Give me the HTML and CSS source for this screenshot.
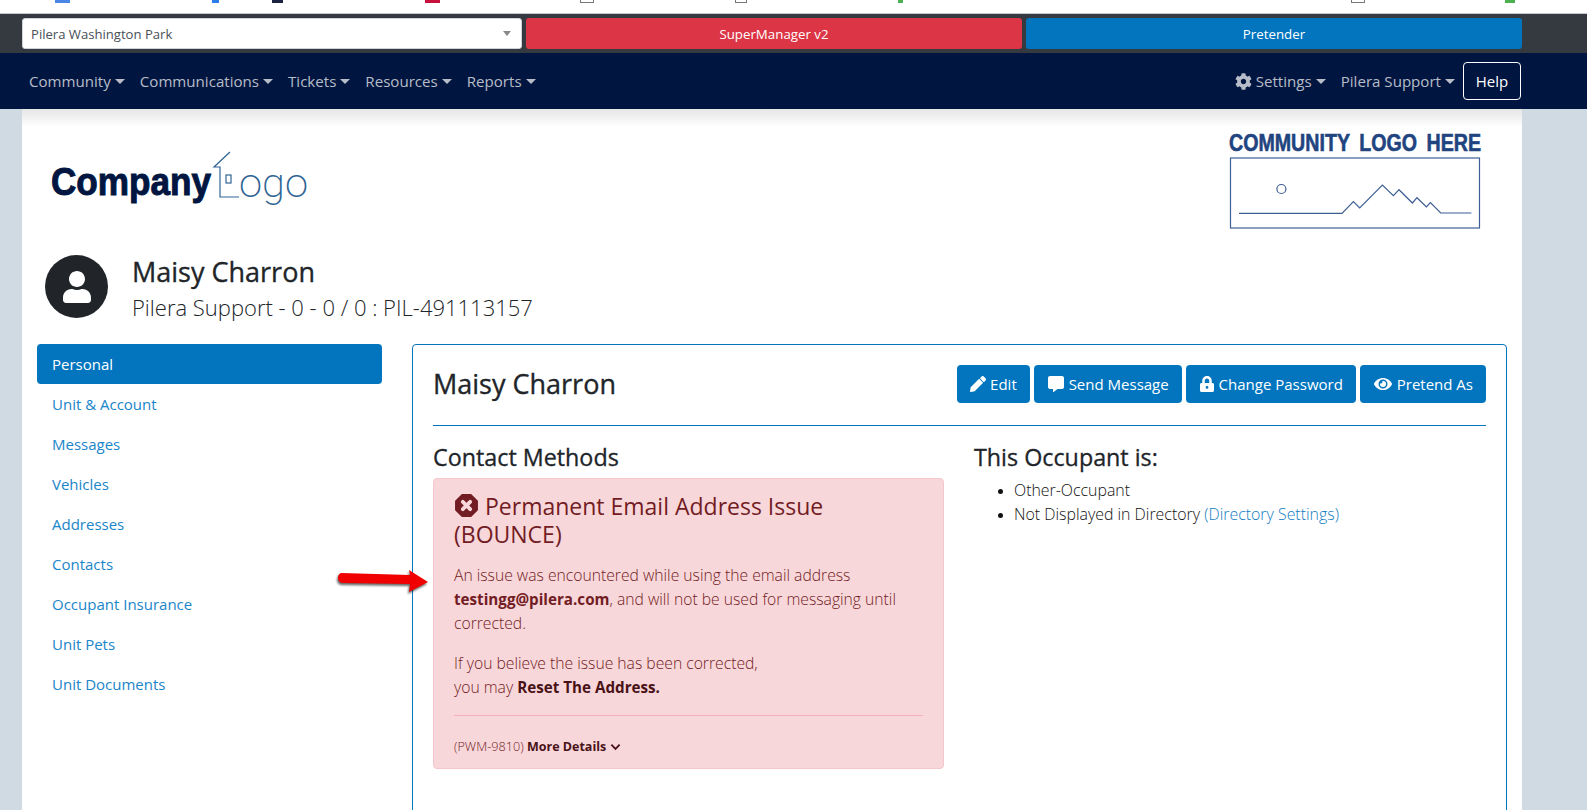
FILE: index.html
```html
<!DOCTYPE html>
<html lang="en">

<head>
    <meta charset="UTF-8">
    <meta name="viewport" content="width=device-width, initial-scale=1.0">
    <title>Maisy Charron</title>
    <link rel="stylesheet" href="styles.css">
</head>

<body>

    <!-- cut off browser bookmarks -->
    <div class="bookmarks">
        <span class="mark mark-blue"></span>
        <span class="mark mark-gem"></span>
        <span class="mark mark-dark"></span>
        <span class="mark mark-red"></span>
        <span class="mark mark-box"></span>
        <span class="mark mark-box2"></span>
        <span class="mark mark-green"></span>
        <span class="mark mark-box3"></span>
        <span class="mark mark-green2"></span>
    </div>

    <div class="switchbar">
        <div class="community-select">
            <span>Pilera Washington Park</span>
            <span class="select-arrow"></span>
        </div>
        <a class="bar-btn bar-red">SuperManager v2</a>
        <a class="bar-btn bar-blue">Pretender</a>
    </div>

    <nav class="navbar">
        <a class="nav-link caret">Community</a>
        <a class="nav-link caret">Communications</a>
        <a class="nav-link caret">Tickets</a>
        <a class="nav-link caret">Resources</a>
        <a class="nav-link caret">Reports</a>
        <span class="nav-space"></span>
        <a class="nav-link caret"><svg class="icon icon-gear" viewBox="0 0 512 512"><path d="M487.4 315.7l-42.6-24.6c4.3-23.2 4.3-47 0-70.2l42.6-24.6c4.9-2.8 7.1-8.6 5.5-14-11.1-35.6-30-67.8-54.7-94.6-3.8-4.1-10-5.1-14.8-2.3L380.8 110c-17.9-15.4-38.5-27.3-60.8-35.1V25.8c0-5.6-3.9-10.5-9.4-11.7-36.7-8.2-74.3-7.8-109.2 0-5.5 1.2-9.4 6.1-9.4 11.7V75c-22.2 7.9-42.8 19.8-60.8 35.1L88.7 85.5c-4.9-2.8-11-1.9-14.8 2.3-24.7 26.7-43.6 58.9-54.7 94.6-1.7 5.4.6 11.2 5.5 14L67.3 221c-4.3 23.2-4.3 47 0 70.2l-42.6 24.6c-4.9 2.8-7.1 8.6-5.5 14 11.1 35.6 30 67.8 54.7 94.6 3.8 4.1 10 5.1 14.8 2.3l42.6-24.6c17.9 15.4 38.5 27.3 60.8 35.1v49.2c0 5.6 3.9 10.5 9.4 11.7 36.7 8.2 74.3 7.8 109.2 0 5.5-1.2 9.4-6.1 9.4-11.7v-49.2c22.2-7.9 42.8-19.8 60.8-35.1l42.6 24.6c4.9 2.8 11 1.9 14.8-2.3 24.7-26.7 43.6-58.9 54.7-94.6 1.5-5.5-.7-11.3-5.6-14.1zM256 336c-44.1 0-80-35.9-80-80s35.9-80 80-80 80 35.9 80 80-35.9 80-80 80z"/></svg> Settings</a>
        <a class="nav-link caret">Pilera Support</a>
        <a class="help-btn">Help</a>
    </nav>

    <div class="page">
        <div class="logos">
            <svg class="company-logo" viewBox="0 0 256 54">
                <text class="logo-bold" x="0" y="43" textLength="160" lengthAdjust="spacingAndGlyphs">Company</text>
                <path class="logo-line" d="M179 0 L163 15 H169 V45 H188"/>
                <rect class="logo-line" x="175" y="23" width="5" height="8"/>
                <text class="logo-light" x="188" y="45" textLength="69" lengthAdjust="spacingAndGlyphs">ogo</text>
            </svg>
            <div class="community-logo">
                <svg viewBox="0 0 252 96" class="community-svg">
                    <text class="community-text" x="0" y="18" textLength="252" lengthAdjust="spacingAndGlyphs">COMMUNITY LOGO HERE</text>
                    <rect class="community-line" x="1.5" y="25" width="249" height="70"/>
                    <circle class="community-line" cx="52.4" cy="56" r="4.5"/>
                    <path class="community-line" d="M10 80.3 H113 L124.4 68.7 L130.7 75 L153.4 52 L164.4 62.7 L170 56.7 L183.4 70 L188 64.7 L197.4 74 L201.4 69.7 L211.7 80 H242.4"/>
                </svg>
            </div>
        </div>

        <div class="profile">
            <span class="avatar">
                <svg viewBox="0 0 448 512"><path d="M224 256c70.7 0 128-57.3 128-128S294.7 0 224 0 96 57.3 96 128s57.3 128 128 128zm89.6 32h-16.7c-22.2 10.2-46.9 16-72.9 16s-50.6-5.8-72.9-16h-16.7C60.2 288 0 348.2 0 422.4V464c0 26.5 21.5 48 48 48h352c26.5 0 48-21.5 48-48v-41.6c0-74.2-60.2-134.4-134.4-134.4z"/></svg>
            </span>
            <div>
                <div class="profile-name">Maisy Charron</div>
                <div class="profile-sub">Pilera Support - 0 - 0 / 0 : PIL-491113157</div>
            </div>
        </div>

        <div class="content">
            <ul class="sidenav">
                <li class="active"><a>Personal</a></li>
                <li><a>Unit &amp; Account</a></li>
                <li><a>Messages</a></li>
                <li><a>Vehicles</a></li>
                <li><a>Addresses</a></li>
                <li><a>Contacts</a></li>
                <li><a>Occupant Insurance</a></li>
                <li><a>Unit Pets</a></li>
                <li><a>Unit Documents</a></li>
            </ul>

            <div class="panel">
                <div class="panel-head">
                    <h2>Maisy Charron</h2>
                    <div class="actions">
                        <a class="btn"><svg class="icon" viewBox="0 0 512 512"><path d="M497.9 142.1l-46.1 46.1c-4.7 4.7-12.3 4.7-17 0l-111-111c-4.7-4.7-4.7-12.3 0-17l46.1-46.1c18.7-18.7 49.1-18.7 67.9 0l60.1 60.1c18.8 18.7 18.8 49.1 0 67.9zM284.2 99.8L21.6 362.4.4 483.9c-2.9 16.4 11.4 30.6 27.8 27.8l121.5-21.3 262.6-262.6c4.7-4.7 4.7-12.3 0-17l-111-111c-4.8-4.7-12.4-4.7-17.1 0z"/></svg> Edit</a>
                        <a class="btn"><svg class="icon icon-msg" viewBox="0 0 512 512"><path d="M448 0H64C28.7 0 0 28.7 0 64v288c0 35.3 28.7 64 64 64h96v84c0 9.8 11.2 15.5 19.1 9.7L304 416h144c35.3 0 64-28.7 64-64V64c0-35.3-28.7-64-64-64z"/></svg> Send Message</a>
                        <a class="btn"><svg class="icon" viewBox="0 0 448 512"><path fill-rule="evenodd" d="M400 224h-24v-72C376 68.2 307.8 0 224 0S72 68.2 72 152v72H48c-26.5 0-48 21.5-48 48v192c0 26.5 21.5 48 48 48h352c26.5 0 48-21.5 48-48V272c0-26.5-21.5-48-48-48zm-104 0H152v-72c0-39.7 32.3-72 72-72s72 32.3 72 72v72zM224 320a44 44 0 1 0 0 88a44 44 0 1 0 0-88z"/></svg> Change Password</a>
                        <a class="btn"><svg class="icon icon-wide" viewBox="0 0 576 512"><path d="M572.52 241.4C518.29 135.59 410.93 64 288 64S57.68 135.64 3.48 241.41a32.35 32.35 0 0 0 0 29.19C57.71 376.41 165.07 448 288 448s230.32-71.64 284.52-177.41a32.35 32.35 0 0 0 0-29.19zM288 400a144 144 0 1 1 144-144 143.93 143.93 0 0 1-144 144zm0-240a95.31 95.31 0 0 0-25.31 3.79 47.85 47.85 0 0 1-66.9 66.9A95.78 95.78 0 1 0 288 160z"/></svg> Pretend As</a>
                    </div>
                </div>

                <div class="panel-cols">
                    <div class="col">
                        <h3>Contact Methods</h3>
                        <div class="alert">
                            <h4>
                                <svg class="stop-icon" viewBox="0 0 24 24">
                                    <polygon class="stop-shape" points="8,2 16,2 22,8 22,16 16,22 8,22 2,16 2,8"/>
                                    <path class="stop-x" d="M8.5 8.5 L15.5 15.5 M15.5 8.5 L8.5 15.5"/>
                                </svg>
                                Permanent Email Address Issue (BOUNCE)
                            </h4>
                            <p>An issue was encountered while using the email address <b>testingg@pilera.com</b>, and will not be used for messaging until corrected.</p>
                            <p>If you believe the issue has been corrected,<br>you may <a class="alert-link">Reset The Address.</a></p>
                            <hr>
                            <div class="alert-foot">
                                (PWM-9810) <a class="alert-link">More Details <svg class="chev" viewBox="0 0 12 8"><path d="M1.5 1.5 L6 6 L10.5 1.5"/></svg></a>
                            </div>
                        </div>
                    </div>
                    <div class="col">
                        <h3>This Occupant is:</h3>
                        <ul class="occupant-list">
                            <li>Other-Occupant</li>
                            <li>Not Displayed in Directory <a>(Directory Settings)</a></li>
                        </ul>
                    </div>
                </div>
            </div>
        </div>

        <!-- annotation drawn on top of the screenshot -->
        <svg class="red-arrow" viewBox="0 0 92 26">
            <path d="M3 5 L72 7 L71 2 L90 14 L71 24 L72 16 L4 15 Q0 14 0 10 Q0 6 3 5 Z"/>
        </svg>
    </div>

</body>

</html>
```

FILE: styles.css
```css
* {
    box-sizing: border-box;
}

html,
body {
    height: 810px;
    overflow: hidden;
}

body {
    font-family: "Open Sans", "Noto Sans", sans-serif;
    font-size: 15px;
    line-height: 24px;
    color: #212529;
    background-color: #d0dae3;
    margin: 0;
    padding: 0;
}

a {
    color: #1a85c8;
    text-decoration: none;
}

/* bookmarks strip */
.bookmarks {
    display: flex;
    height: 14px;
    background-color: #fff;
    border-bottom: 1px solid #c8cbce;
}

.mark {
    display: block;
    height: 3px;
    width: 15px;
}

.mark-blue { margin-left: 55px; background-color: #4a86e8; }
.mark-gem { margin-left: 142px; width: 7px; background-color: #2b7de9; }
.mark-dark { margin-left: 53px; width: 11px; background-color: #1c2340; }
.mark-red { margin-left: 142px; background-color: #c8103c; }
.mark-box { margin-left: 140px; width: 14px; border: 1px solid #777; border-top: 0; }
.mark-box2 { margin-left: 141px; width: 12px; border: 1px solid #777; border-top: 0; }
.mark-green { margin-left: 151px; width: 5px; background-color: #4caf50; }
.mark-box3 { margin-left: 448px; width: 14px; border: 1px solid #777; border-top: 0; }
.mark-green2 { margin-left: 140px; width: 10px; background-color: #4caf50; }

/* dark switch bar */
.switchbar {
    display: flex;
    gap: 4px;
    height: 39px;
    padding: 4px 65px 4px 22px;
    background-color: #343a40;
}

.community-select {
    display: flex;
    flex: none;
    width: 500px;
    align-items: center;
    justify-content: space-between;
    padding: 0 10px 0 8px;
    font-size: 13.1px;
    color: #495057;
    background-color: #fff;
    border: 1px solid #ced4da;
    border-radius: 3px;
}

.select-arrow {
    border-top: 5px solid #888;
    border-left: 4px solid transparent;
    border-right: 4px solid transparent;
}

.bar-btn {
    display: flex;
    flex: 1;
    align-items: center;
    justify-content: center;
    font-size: 13.3px;
    color: #fff;
    border-radius: 3px;
}

.bar-red {
    background-color: #dc3545;
}

.bar-blue {
    background-color: #0275be;
}

/* main nav */
.navbar {
    display: flex;
    align-items: center;
    height: 56px;
    padding: 0 66px 1px 29px;
    background-color: #001540;
}

.nav-link {
    margin-right: 15px;
    font-size: 15.1px;
    color: rgba(255, 255, 255, 0.72);
}

.caret::after {
    content: "";
    display: inline-block;
    margin-left: 4px;
    vertical-align: 3px;
    border-top: 5px solid rgba(255, 255, 255, 0.72);
    border-left: 5px solid transparent;
    border-right: 5px solid transparent;
}

.nav-space {
    flex: 1;
}

.help-btn {
    width: 58px;
    height: 38px;
    margin-left: -7px;
    font-size: 15px;
    line-height: 36px;
    text-align: center;
    color: #fff;
    border: 1px solid #fff;
    border-radius: 4px;
}

.icon {
    display: inline-block;
    width: 16px;
    height: 16px;
    vertical-align: -2px;
    fill: currentColor;
}

.icon-gear {
    width: 17px;
    height: 17px;
    vertical-align: -3px;
}

.icon-msg {
    width: 18px;
}

.icon-wide {
    width: 20px;
}

/* page */
.page {
    position: relative;
    width: 1500px;
    height: 701px;
    margin-left: 22px;
    padding: 43px 15px 0;
    background: linear-gradient(#e4e5e6, #fff 18px);
}

.logos {
    display: flex;
    justify-content: space-between;
    align-items: flex-start;
    padding-left: 14px;
    height: 103px;
}

.company-logo {
    width: 256px;
    height: 54px;
    overflow: visible;
}

.logo-bold {
    font-family: "Liberation Sans", sans-serif;
    font-weight: 700;
    font-size: 39px;
    fill: #001540;
    stroke: #001540;
    stroke-width: 1;
}

.logo-light {
    font-family: Roboto, sans-serif;
    font-weight: 200;
    font-size: 41px;
    fill: #2f6494;
}

.logo-line {
    fill: none;
    stroke: #2f6494;
    stroke-width: 1.2;
}

.community-logo {
    margin: -19px 26px 0 0;
}

.community-svg {
    display: block;
    width: 252px;
    height: 96px;
    overflow: visible;
}

.community-text {
    font-family: "Liberation Sans", sans-serif;
    font-weight: 700;
    font-size: 24px;
    word-spacing: 5px;
    fill: #1f4480;
    stroke: #1f4480;
    stroke-width: 0.6;
}

.community-line {
    fill: none;
    stroke: #3d5f95;
    stroke-width: 1.2;
}

.profile {
    display: flex;
    align-items: flex-start;
    gap: 24px;
    padding-left: 8px;
}

.avatar {
    display: flex;
    align-items: center;
    justify-content: center;
    width: 63px;
    height: 63px;
    background-color: #212529;
    border-radius: 50%;
}

.avatar svg {
    width: 28px;
    height: 32px;
    fill: #fff;
}

.profile-name {
    font-size: 27px;
    line-height: 34px;
    -webkit-text-stroke: 0.35px #212529;
}

.profile-sub {
    font-size: 22px;
    font-weight: 300;
    line-height: 36px;
}

.content {
    display: flex;
    margin-top: 19px;
}

/* side nav */
.sidenav {
    flex: none;
    width: 345px;
    margin: 0 30px 0 0;
    padding: 0;
    list-style: none;
}

.sidenav li {
    height: 40px;
    padding-left: 15px;
    line-height: 40px;
}

.sidenav li.active {
    background-color: #0275be;
    border-radius: 4px;
}

.sidenav li.active a {
    color: #fff;
}

/* panel */
.panel {
    flex: none;
    width: 1095px;
    height: 600px;
    padding: 20px;
    border: 1px solid #0275be;
    border-radius: 4px;
}

.panel-head {
    display: flex;
    justify-content: space-between;
    align-items: center;
    height: 61px;
    padding-bottom: 22px;
    border-bottom: 1px solid #0275be;
}

.panel-head h2 {
    margin: 0;
    font-size: 27px;
    font-weight: 400;
    -webkit-text-stroke: 0.35px #212529;
}

.actions {
    display: flex;
    gap: 4px;
}

.btn {
    height: 38px;
    padding: 0 13px;
    line-height: 38px;
    color: #fff;
    background-color: #0275be;
    border-radius: 4px;
}

.panel-cols {
    display: flex;
    gap: 30px;
    margin-top: 14px;
}

.col {
    width: 511px;
}

.panel-cols h3 {
    margin: 0;
    padding-bottom: 3px;
    font-size: 23.3px;
    font-weight: 400;
    line-height: 35px;
    -webkit-text-stroke: 0.3px #212529;
}

.occupant-list {
    margin: 0;
    padding-left: 40px;
    font-weight: 300;
    font-size: 15.9px;
    color: #111;
}

.occupant-list a {
    color: #0f7cc2;
}

.occupant-list li::marker {
    font-size: 13px;
}

/* email alert */
.alert {
    height: 291px;
    padding: 13px 20px;
    color: #721c24;
    background-color: #f8d7da;
    border: 1px solid #f5c6cb;
    border-radius: 4px;
}

.alert h4 {
    margin: 0 0 15px;
    font-size: 23px;
    font-weight: 400;
    line-height: 28px;
}

.alert p {
    margin: 0 0 16px;
    font-weight: 300;
    font-size: 15.7px;
}

.alert b {
    font-weight: 700;
    font-size: 15.2px;
}

.alert hr {
    margin: 16px 0 18px;
    border: 0;
    border-top: 1px solid #f1b0b7;
}

.alert-link {
    font-weight: 700;
    font-size: 15.2px;
    color: #491217;
}

.alert-foot {
    font-size: 12.7px;
    font-weight: 300;
}

.alert-foot .alert-link {
    font-size: 12.5px;
}

.stop-icon {
    width: 25px;
    height: 25px;
    vertical-align: -3px;
}

.stop-shape {
    fill: #721c24;
    stroke: #721c24;
    stroke-width: 2;
    stroke-linejoin: round;
}

.stop-x {
    fill: none;
    stroke: #f8d7da;
    stroke-width: 3.6;
    stroke-linecap: round;
}

.chev {
    width: 11px;
    height: 8px;
    fill: none;
    stroke: #491217;
    stroke-width: 2;
}

.red-arrow {
    position: absolute;
    left: 316px;
    top: 459px;
    width: 92px;
    height: 26px;
    fill: #f00000;
    filter: drop-shadow(-1px 2px 1px rgba(0, 0, 0, 0.6));
}
```
